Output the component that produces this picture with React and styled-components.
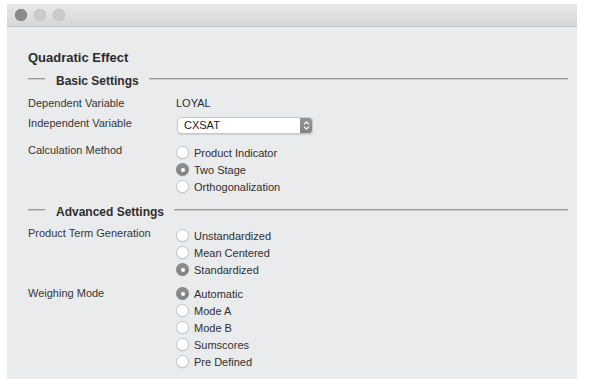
import React from "react";
import styled, { createGlobalStyle } from "styled-components";

const GlobalStyle = createGlobalStyle`
  html, body { margin: 0; padding: 0; background: #ffffff; }
  body { font-family: "Liberation Sans", Arial, sans-serif; }
`;

const Window = styled.div`
  margin: 4px 0 0 7px;
  width: 570px;
  height: 375px;
  background: #eaebed;
  display: flex;
  flex-direction: column;
  overflow: hidden;
`;

const TitleBar = styled.div`
  height: 22px;
  flex: none;
  background: linear-gradient(#e9e9e9, #d6d6d6);
  border-bottom: 1px solid #c2c2c2;
  display: flex;
  align-items: center;
  gap: 7px;
  padding-left: 8px;
`;

const Light = styled.span`
  width: 12px;
  height: 12px;
  border-radius: 50%;
  background: ${(p) => (p.$active ? "#8c8c8c" : "#cbcbcb")};
  box-shadow: inset 0 0 0 0.5px ${(p) => (p.$active ? "#7a7a7a" : "#bdbdbd")};
`;

const Content = styled.div`
  padding: 0 9px 0 21px;
  display: flex;
  flex-direction: column;
`;

const Title = styled.div`
  margin-top: 23px;
  font-size: 13px;
  line-height: 16px;
  font-weight: bold;
  color: #2b2b2b;
`;

const SectionHeader = styled.div`
  margin-top: ${(p) => p.$top}px;
  display: flex;
  align-items: center;
  gap: 10px;
  height: 16px;
`;

const Rule = styled.div`
  height: 2px;
  margin-bottom: 4px;
  background: linear-gradient(#9c9c9c 50%, #c9c9c9 50%);
  flex: ${(p) => (p.$grow ? "1" : "none")};
  width: ${(p) => (p.$grow ? "auto" : "17px")};
`;

const HeaderText = styled.span`
  font-size: 12px;
  line-height: 16px;
  font-weight: bold;
  color: #2e2e2e;
  margin-left: 1px;
`;

const Row = styled.div`
  margin-top: ${(p) => p.$top}px;
  display: grid;
  grid-template-columns: 148px 1fr;
  align-items: start;
`;

const Label = styled.div`
  font-size: 11px;
  line-height: 14px;
  color: #363636;
`;

const Value = styled.div`
  font-size: 11px;
  line-height: 14px;
  color: #2f2f2f;
`;

const Select = styled.div`
  margin: 1px 0 0 1px;
  width: 136px;
  height: 17px;
  box-sizing: border-box;
  background: #fff;
  border: 1px solid #c9c9c9;
  border-radius: 4px;
  box-shadow: 0 1px 1px rgba(0, 0, 0, 0.12);
  display: flex;
  align-items: stretch;
  overflow: hidden;
`;

const SelectText = styled.span`
  flex: 1;
  padding-left: 6px;
  font-size: 11px;
  line-height: 15px;
  color: #222;
`;

const Stepper = styled.span`
  width: 12px;
  background: linear-gradient(#959595, #838383);
  display: flex;
  align-items: center;
  justify-content: center;
`;

const RadioGroup = styled.div`
  margin-top: ${(p) => p.$offset}px;
  display: flex;
  flex-direction: column;
`;

const Option = styled.div`
  height: 17px;
  display: flex;
  align-items: center;
  gap: 5px;
  font-size: 11px;
  color: #2f2f2f;
`;

const Circle = styled.span`
  width: 13px;
  height: 13px;
  box-sizing: border-box;
  border-radius: 50%;
  flex: none;
  display: flex;
  align-items: center;
  justify-content: center;
  background: ${(p) => (p.$checked ? "linear-gradient(#909090, #828282)" : "#ffffff")};
  border: 1px solid ${(p) => (p.$checked ? "#7d7d7d" : "#c6c6c6")};
  box-shadow: 0 0.5px 1px rgba(0, 0, 0, 0.12);
  &::after {
    content: "";
    display: ${(p) => (p.$checked ? "block" : "none")};
    width: 4px;
    height: 4px;
    border-radius: 50%;
    background: #fff;
  }
`;

function Radios({ options, selected, offset }) {
  return (
    <RadioGroup $offset={offset}>
      {options.map((o) => (
        <Option key={o}>
          <Circle $checked={o === selected} />
          <span>{o}</span>
        </Option>
      ))}
    </RadioGroup>
  );
}

function Header({ text, top }) {
  return (
    <SectionHeader $top={top}>
      <Rule />
      <HeaderText>{text}</HeaderText>
      <Rule $grow />
    </SectionHeader>
  );
}

export default function App() {
  return (
    <>
      <GlobalStyle />
      <Window>
        <TitleBar>
          <Light $active />
          <Light />
          <Light />
        </TitleBar>
        <Content>
          <Title>Quadratic Effect</Title>
          <Header text="Basic Settings" top={7} />
          <Row $top={7}>
            <Label>Dependent Variable</Label>
            <Value>LOYAL</Value>
          </Row>
          <Row $top={6}>
            <Label>Independent Variable</Label>
            <Select>
              <SelectText>CXSAT</SelectText>
              <Stepper>
                <svg width="7" height="11" viewBox="0 0 7 11" fill="none" stroke="#fff" strokeWidth="1.1" strokeLinecap="round" strokeLinejoin="round">
                  <path d="M1.3 4 L3.5 1.8 L5.7 4" />
                  <path d="M1.3 7 L3.5 9.2 L5.7 7" />
                </svg>
              </Stepper>
            </Select>
          </Row>
          <Row $top={9}>
            <Label>Calculation Method</Label>
            <Radios
              offset={1}
              options={["Product Indicator", "Two Stage", "Orthogonalization"]}
              selected="Two Stage"
            />
          </Row>
          <Header text="Advanced Settings" top={9} />
          <Row $top={6}>
            <Label>Product Term Generation</Label>
            <Radios
              offset={1}
              options={["Unstandardized", "Mean Centered", "Standardized"]}
              selected="Standardized"
            />
          </Row>
          <Row $top={8}>
            <Label>Weighing Mode</Label>
            <Radios
              offset={-1}
              options={["Automatic", "Mode A", "Mode B", "Sumscores", "Pre Defined"]}
              selected="Automatic"
            />
          </Row>
        </Content>
      </Window>
    </>
  );
}
